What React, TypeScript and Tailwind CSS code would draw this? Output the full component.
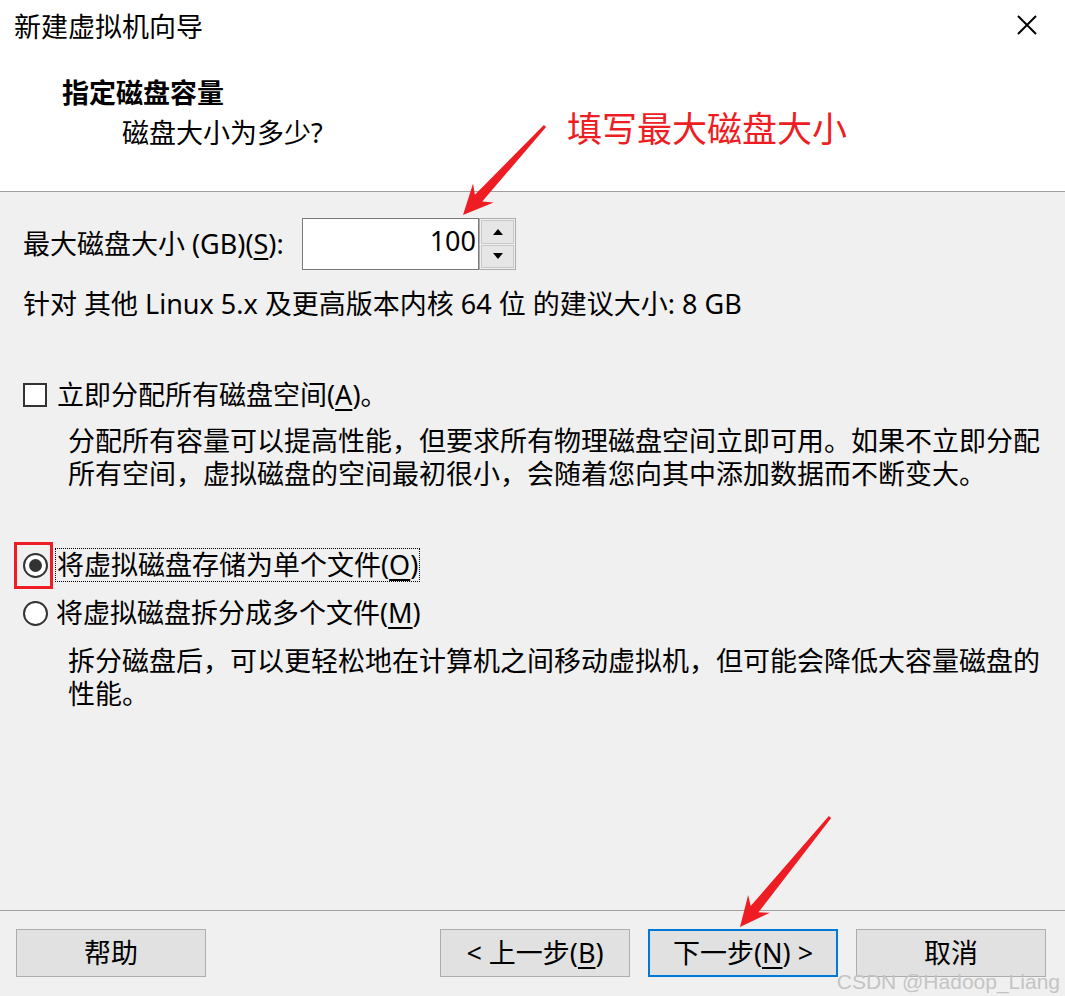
import React from 'react'

const arrowPoints = (x1: number, y1: number, x2: number, y2: number) => {
  const dx = x2 - x1
  const dy = y2 - y1
  const len = Math.hypot(dx, dy)
  const ux = dx / len
  const uy = dy / len
  const nx = -uy
  const ny = ux
  const headLen = 30
  const headW = 14
  const neckW = 5
  const tailW = 1.5
  const bx = x2 - ux * headLen
  const by = y2 - uy * headLen
  const kx = x2 - ux * (headLen - 7)
  const ky = y2 - uy * (headLen - 7)
  const pts = [
    [x1 + nx * tailW, y1 + ny * tailW],
    [kx + nx * neckW, ky + ny * neckW],
    [bx + nx * headW, by + ny * headW],
    [x2, y2],
    [bx - nx * headW, by - ny * headW],
    [kx - nx * neckW, ky - ny * neckW],
    [x1 - nx * tailW, y1 - ny * tailW],
  ]
  return pts.map((p) => p.join(',')).join(' ')
}

const Button = ({ children, focused }: { children: React.ReactNode; focused?: boolean }) => (
  <button
    className={
      focused
        ? 'w-[190px] h-[48px] bg-[#e1e1e1] border-2 border-[#0078d7] flex items-center justify-center leading-[36px]'
        : 'w-[190px] h-[48px] bg-[#e1e1e1] border border-[#adadad] flex items-center justify-center leading-[36px]'
    }
  >
    {children}
  </button>
)

const App = () => {
  return (
    <div className="relative w-[1065px] h-[996px] flex flex-col bg-[#f0f0f0] overflow-hidden text-[27px] text-black font-['Noto_Sans','Noto_Sans_CJK_SC',sans-serif]">
      {/* header */}
      <div className="h-[192px] shrink-0 bg-white border-b border-[#a0a0a0]">
        <div className="flex items-center justify-between pl-[14px] pr-[28px] pt-[9px] leading-[36px]">
          <span>新建虚拟机向导</span>
          <svg width="20" height="20" viewBox="0 0 20 20" className="-mt-[4px]">
            <path d="M1 1 L19 19 M19 1 L1 19" stroke="#000" strokeWidth="2" />
          </svg>
        </div>
        <div className="pl-[62px] mt-[30px] font-bold leading-[36px]">指定磁盘容量</div>
        <div className="pl-[122px] mt-[4px] leading-[36px]">磁盘大小为多少?</div>
      </div>

      {/* body */}
      <div className="flex-1 flex flex-col px-[23px]">
        <div className="mt-[26px] h-[52px] flex items-center">
          <span className="w-[279px] leading-[36px]">
            最大磁盘大小 (GB)(<span className="underline underline-offset-4">S</span>):
          </span>
          <div className="w-[177px] h-[52px] bg-white border border-[#7a7a7a] flex items-center justify-end pr-[2px] pb-[6px] leading-[36px]">
            100
          </div>
          <div className="w-[37px] h-[52px] flex flex-col border border-[#adadad] bg-[#f0f0f0]">
            <div className="flex-1 m-[1px] mb-0 bg-[#e6e6e6] border border-[#c8c8c8] flex items-center justify-center">
              <svg width="10" height="6" viewBox="0 0 10 6"><path d="M5 0 L10 6 L0 6 Z" fill="#000" /></svg>
            </div>
            <div className="flex-1 m-[1px] bg-[#e6e6e6] border border-[#c8c8c8] flex items-center justify-center">
              <svg width="10" height="6" viewBox="0 0 10 6"><path d="M0 0 L10 0 L5 6 Z" fill="#000" /></svg>
            </div>
          </div>
        </div>

        <div className="mt-[16px] leading-[36px]">针对 其他 Linux 5.x 及更高版本内核 64 位 的建议大小: 8 GB</div>

        <div className="mt-[55px] h-[36px] flex items-center">
          <div className="w-[24px] h-[24px] border-2 border-[#333] bg-white" />
          <span className="ml-[10px] leading-[36px]">
            立即分配所有磁盘空间(<span className="underline underline-offset-4">A</span>)。
          </span>
        </div>

        <div className="mt-[11px] pl-[45px] leading-[33px]">
          <div>分配所有容量可以提高性能，但要求所有物理磁盘空间立即可用。如果不立即分配</div>
          <div>所有空间，虚拟磁盘的空间最初很小，会随着您向其中添加数据而不断变大。</div>
        </div>

        <div className="relative mt-[57px] h-[36px] flex items-center">
          <div className="w-[25px] h-[25px] rounded-full border-2 border-[#333] bg-white flex items-center justify-center">
            <div className="w-[13px] h-[13px] rounded-full bg-[#333]" />
          </div>
          <span className="ml-[7px] h-[34px] border border-dotted border-black px-[1px] leading-[32px]">
            将虚拟磁盘存储为单个文件(<span className="underline underline-offset-4">O</span>)
          </span>
          <div className="absolute left-[-9px] top-[-5px] w-[39px] h-[47px] border-[3px] border-[#ee1c25]" />
        </div>

        <div className="mt-[12px] h-[36px] flex items-center">
          <div className="w-[25px] h-[25px] rounded-full border-2 border-[#333] bg-white" />
          <span className="ml-[8px] leading-[36px]">
            将虚拟磁盘拆分成多个文件(<span className="underline underline-offset-4">M</span>)
          </span>
        </div>

        <div className="mt-[13px] pl-[45px] leading-[33px]">
          <div>拆分磁盘后，可以更轻松地在计算机之间移动虚拟机，但可能会降低大容量磁盘的</div>
          <div>性能。</div>
        </div>
      </div>

      {/* footer */}
      <div className="h-[86px] shrink-0 border-t border-[#a0a0a0] flex items-start pt-[18px] pl-[16px] pr-[19px]">
        <Button>帮助</Button>
        <div className="flex-1" />
        <div className="flex gap-[18px]">
          <Button>
            &lt; 上一步(<span className="underline underline-offset-4">B</span>)
          </Button>
          <Button focused>
            下一步(<span className="underline underline-offset-4">N</span>) &gt;
          </Button>
          <Button>取消</Button>
        </div>
      </div>

      {/* annotations */}
      <div className="absolute left-[567px] top-[106px] text-[35px] leading-[42px] text-[#ee1d23] font-['Noto_Sans_CJK_SC',sans-serif]">
        填写最大磁盘大小
      </div>
      <svg className="absolute inset-0 pointer-events-none" width="1065" height="996">
        <polygon points={arrowPoints(545, 126, 463, 215)} fill="#ee1d23" />
        <polygon points={arrowPoints(830, 817, 740, 927)} fill="#ee1d23" />
      </svg>
      <div className="absolute right-[5px] bottom-[1px] text-[21px] leading-[26px] text-[#c4c4c4] font-['Liberation_Sans',sans-serif]">
        CSDN @Hadoop_Liang
      </div>
    </div>
  )
}

export default App
